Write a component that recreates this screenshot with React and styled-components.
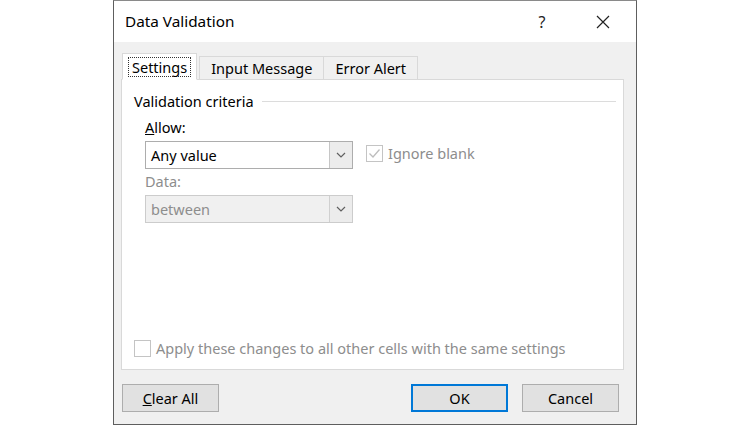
import React from "react";
import styled, { createGlobalStyle } from "styled-components";

const Global = createGlobalStyle`
  html, body { margin: 0; padding: 0; background: #ffffff; }
  body { font-family: "Noto Sans", "Open Sans", sans-serif; color: #000; }
`;

const Page = styled.div`
  display: flex;
  justify-content: center;
  height: 425px;
`;

const Dialog = styled.div`
  width: 524px;
  height: 425px;
  box-sizing: border-box;
  border: 1px solid #5e5e5e;
  border-top-color: #8a8a8a;
  background: #f0f0f0;
  display: flex;
  flex-direction: column;
`;

const TitleBar = styled.div`
  height: 41px;
  background: #ffffff;
  display: flex;
  align-items: center;
  padding-left: 11px;
  flex-shrink: 0;
`;

const Title = styled.div`
  flex: 1;
  font-size: 15.3px;
  color: #000;
  margin-top: -1px;
`;

const TitleButton = styled.div`
  width: 46px;
  height: 41px;
  display: flex;
  align-items: center;
  justify-content: center;
  font-size: 16px;
  color: #222;
  margin-right: ${p => p.$gap || 0}px;
`;

const Body = styled.div`
  flex: 1;
  display: flex;
  flex-direction: column;
  padding: 11px 12px 0 7px;
`;

const TabRow = styled.div`
  display: flex;
  align-items: flex-end;
  height: 27px;
  padding-left: 1px;
  position: relative;
  z-index: 1;
  margin-bottom: -1px;
`;

const Tab = styled.div`
  box-sizing: border-box;
  height: ${p => (p.$active ? 27 : 24)}px;
  padding: 0 ${p => (p.$active ? 5 : 11)}px;
  margin-left: ${p => p.$ml || 0}px;
  display: flex;
  align-items: center;
  font-size: 14.5px;
  border: 1px solid #d9d9d9;
  border-bottom: ${p => (p.$active ? "1px solid #fff" : "1px solid #d9d9d9")};
  background: ${p => (p.$active ? "#ffffff" : "#f0f0f0")};
`;

const FocusLabel = styled.span`
  border: 1px dotted #333;
  padding: 0 3px;
  line-height: 18px;
`;

const Panel = styled.div`
  height: 291px;
  box-sizing: border-box;
  background: #ffffff;
  border: 1px solid #d9d9d9;
  display: flex;
  flex-direction: column;
  padding: 11px 7px 0 12px;
`;

const GroupHeader = styled.div`
  display: flex;
  align-items: center;
  gap: 8px;
  font-size: 14.5px;
  height: 20px;
`;

const Rule = styled.div`
  flex: 1;
  height: 1px;
  background: #dcdcdc;
`;

const Fields = styled.div`
  display: flex;
  flex-direction: column;
  padding-left: 11px;
  margin-top: 6px;
`;

const Label = styled.div`
  font-size: 14.5px;
  height: 20px;
  line-height: 20px;
  color: ${p => (p.$disabled ? "#8d8d8d" : "#000")};
`;

const FieldRow = styled.div`
  display: flex;
  align-items: flex-start;
  gap: 13px;
  margin-top: 4px;
  margin-bottom: 2px;
`;

const Select = styled.div`
  width: 208px;
  height: 28px;
  box-sizing: border-box;
  border: 1px solid ${p => (p.$disabled ? "#cccccc" : "#adadad")};
  background: ${p => (p.$disabled ? "#f0f0f0" : "#ffffff")};
  display: flex;
  align-items: stretch;
`;

const SelectValue = styled.div`
  flex: 1;
  display: flex;
  align-items: center;
  padding-left: 5px;
  font-size: 14.5px;
  color: ${p => (p.$disabled ? "#8d8d8d" : "#000")};
`;

const ArrowBox = styled.div`
  width: 22px;
  border-left: 1px solid ${p => (p.$disabled ? "#d0d0d0" : "#c6c6c6")};
  background: #ececec;
  display: flex;
  align-items: center;
  justify-content: center;
`;

const Check = styled.div`
  display: flex;
  align-items: center;
  gap: 5px;
  font-size: 14.5px;
  color: #8d8d8d;
  margin-top: ${p => p.$top || 0}px;
  margin-bottom: ${p => p.$bottom || 0}px;
`;

const Box = styled.div`
  width: 17px;
  height: 17px;
  box-sizing: border-box;
  border: 1px solid #c4c4c4;
  background: #fff;
  display: flex;
  align-items: center;
  justify-content: center;
`;

const Spacer = styled.div`
  flex: 1;
`;

const Footer = styled.div`
  display: flex;
  align-items: center;
  padding: 14px 5px 0 1px;
`;

const Button = styled.div`
  width: 97px;
  height: 28px;
  box-sizing: border-box;
  background: #e1e1e1;
  border: ${p => (p.$default ? "2px solid #0078d7" : "1px solid #adadad")};
  display: flex;
  align-items: center;
  justify-content: center;
  font-size: 14.5px;
  margin-left: ${p => p.$ml || 0}px;
`;

const Chevron = () => (
  <svg width="10" height="6" viewBox="0 0 10 6">
    <path d="M1 1 L5 5 L9 1" fill="none" stroke="#606060" strokeWidth="1.2" />
  </svg>
);

const Tick = () => (
  <svg width="13" height="11" viewBox="0 0 13 11">
    <path d="M1.5 5.5 L5 9 L11.5 1.5" fill="none" stroke="#bdbdbd" strokeWidth="1.3" />
  </svg>
);

const CloseX = () => (
  <svg width="14" height="14" viewBox="0 0 14 14">
    <path d="M1 1 L13 13 M13 1 L1 13" stroke="#222" strokeWidth="1.2" />
  </svg>
);

export default function App() {
  return (
    <Page>
      <Global />
      <Dialog>
        <TitleBar>
          <Title>Data Validation</Title>
          <TitleButton $gap={15}>?</TitleButton>
          <TitleButton $gap={10}><CloseX /></TitleButton>
        </TitleBar>
        <Body>
          <TabRow>
            <Tab $active><FocusLabel>Settings</FocusLabel></Tab>
            <Tab $ml={2}>Input Message</Tab>
            <Tab $ml={-1}>Error Alert</Tab>
          </TabRow>
          <Panel>
            <GroupHeader>
              Validation criteria
              <Rule />
            </GroupHeader>
            <Fields>
              <Label><u>A</u>llow:</Label>
              <FieldRow>
                <Select>
                  <SelectValue>Any value</SelectValue>
                  <ArrowBox><Chevron /></ArrowBox>
                </Select>
                <Check $top={2}>
                  <Box><Tick /></Box>
                  Ignore blank
                </Check>
              </FieldRow>
              <Label $disabled>Data:</Label>
              <FieldRow>
                <Select $disabled>
                  <SelectValue $disabled>between</SelectValue>
                  <ArrowBox $disabled><Chevron /></ArrowBox>
                </Select>
              </FieldRow>
            </Fields>
            <Spacer />
            <Check $bottom={11}>
              <Box />
              Apply these changes to all other cells with the same settings
            </Check>
          </Panel>
          <Footer>
            <Button><u>C</u>lear All</Button>
            <Spacer />
            <Button $default>OK</Button>
            <Button $ml={14}>Cancel</Button>
          </Footer>
        </Body>
      </Dialog>
    </Page>
  );
}
